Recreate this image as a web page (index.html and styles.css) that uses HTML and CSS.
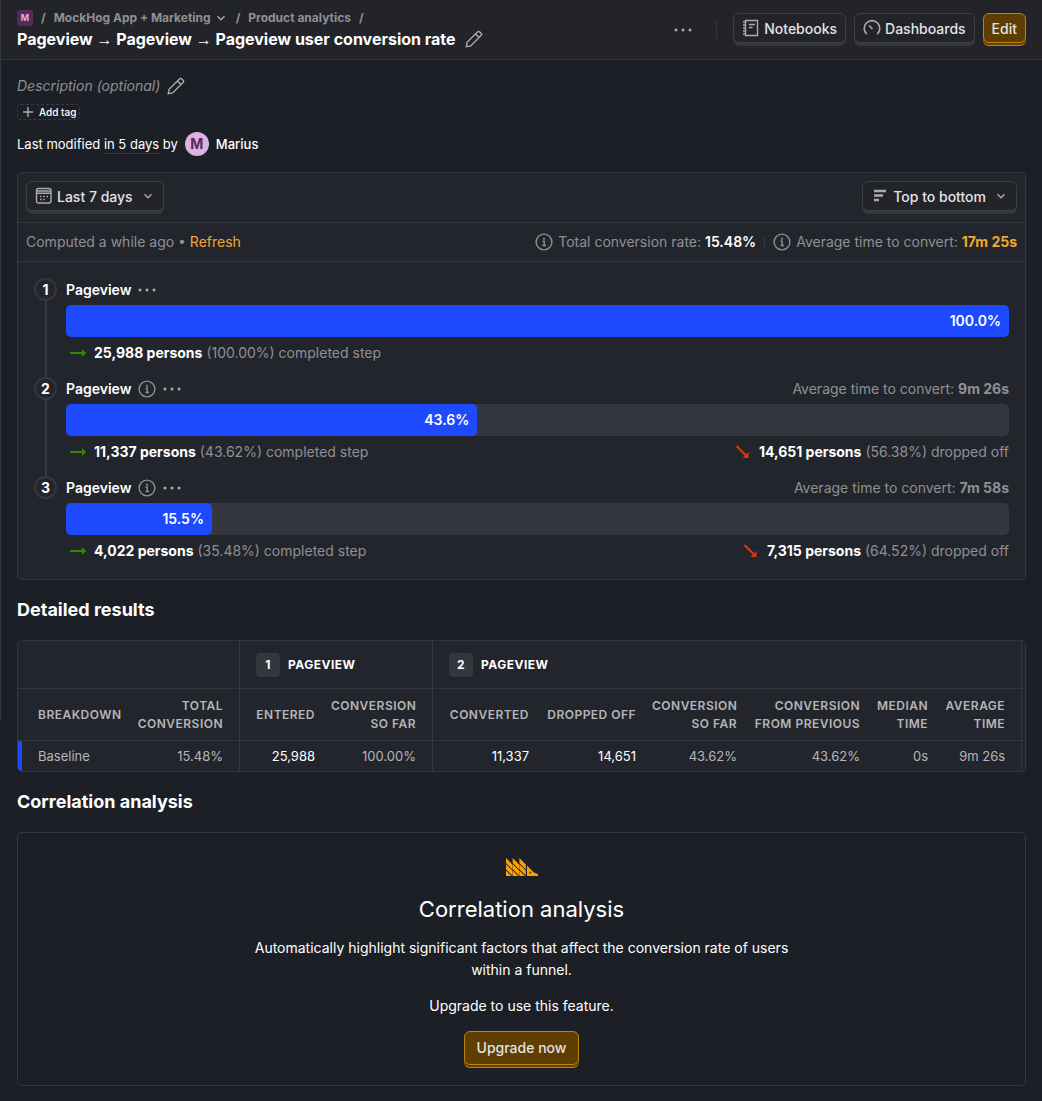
FILE: index.html
```html
<!DOCTYPE html>
<html lang="en">
<head>
<meta charset="utf-8">
<meta name="viewport" content="width=device-width, initial-scale=1">
<title>Pageview → Pageview → Pageview user conversion rate</title>
<link rel="stylesheet" href="styles.css">
</head>
<body>
<svg class="sprite" aria-hidden="true">
  <symbol id="pencil" viewBox="0 0 18 18"><path d="M1.300 16.700l.8-4.400L12.400 2a1.700 1.700 0 0 1 2.400 0l1.200 1.200a1.700 1.700 0 0 1 0 2.400L5.700 15.900zM10.600 4l3.400 3.400"/></symbol>
  <symbol id="dots" viewBox="0 0 18 18"><g fill="currentColor" stroke="none"><circle cx="2" cy="9" r="1.500"/><circle cx="9" cy="9" r="1.500"/><circle cx="16" cy="9" r="1.500"/></g></symbol>
  <symbol id="chevron" viewBox="0 0 14 14"><path d="M3.500 5.200L7 8.700l3.500-3.500"/></symbol>
  <symbol id="info" viewBox="0 0 18 18"><circle cx="9" cy="9" r="7.900"/><path d="M7.600 8.200H9.200v4.300M7.500 12.500h3.500"/><circle cx="9" cy="5.800" r=".4"/></symbol>
  <symbol id="arrow-right" viewBox="0 0 18 18"><path stroke-width="2" d="M1 9h13"/><path fill="currentColor" stroke="none" d="M13 5L17 9l-4 4z"/></symbol>
  <symbol id="arrow-down" viewBox="0 0 18 18"><path stroke-width="2" d="M2.500 3l9.500 9.500"/><path fill="currentColor" stroke="none" d="M14.500 9v6h-6z"/></symbol>
</svg>
<div class="rail"></div>
<div class="page">
  <header class="topbar">
    <div class="topbar-text">
      <nav class="crumbs" aria-label="Breadcrumb">
        <span class="org">M</span><span>/</span>
        <a href="#">MockHog App + Marketing<svg class="icon-sm"><use href="#chevron"/></svg></a><span>/</span>
        <a href="#">Product analytics</a><span>/</span>
      </nav>
      <div class="title"><h1>Pageview <span class="arrow">→</span> Pageview <span class="arrow">→</span> Pageview user conversion rate</h1><button class="plain" aria-label="Edit name"><svg class="icon"><use href="#pencil"/></svg></button></div>
    </div>
    <div class="actions">
      <button class="plain" aria-label="More"><svg class="icon"><use href="#dots"/></svg></button>
      <span class="divider"></span>
      <button class="btn"><svg class="icon" viewBox="0 0 18 18"><path d="M3.500 1.500h12v15h-12zM1 3h2.500M1 6h2.500M1 9h2.500M1 12h2.500M1 15h2.500M7 5.500h6M7 8.500h3.500"/></svg>Notebooks</button>
      <button class="btn"><svg class="icon" viewBox="0 0 18 18"><path stroke-width="1.700" d="M3.800 15.200a7.800 7.800 0 1 1 10.400 0M6 6.500l3.500 3.500"/></svg>Dashboards</button>
      <button class="btn btn-primary">Edit</button>
    </div>
  </header>

  <main class="content">
    <div class="description"><em>Description (optional)</em><button class="plain" aria-label="Edit description"><svg class="icon"><use href="#pencil"/></svg></button></div>
    <button class="add-tag"><svg class="icon-sm" viewBox="0 0 14 14"><path d="M7 2v10M2 7h10"/></svg>Add tag</button>
    <div class="modified"><span>Last modified <span class="dotted">in 5 days</span> by</span><span class="avatar">M</span><span class="who">Marius</span></div>

    <section class="card" aria-label="Funnel">
      <div class="controls">
        <button class="btn"><svg class="icon" viewBox="0 0 18 18"><rect x="1.500" y="1.500" width="14.500" height="14.500" rx="2"/><path d="M1.500 4h14.500M1.500 6.200h14.500"/><path stroke-dasharray="1.500 1.800" d="M5 9.500h8M5 12.500h5.500"/></svg>Last 7 days<svg class="icon-sm"><use href="#chevron"/></svg></button>
        <button class="btn"><svg class="icon" viewBox="0 0 18 18"><path stroke-width="2.400" d="M3 4h12M3 8.500h9M3 13h5"/></svg>Top to bottom<svg class="icon-sm"><use href="#chevron"/></svg></button>
      </div>
      <div class="summary">
        <div>Computed a while ago • <a href="#">Refresh</a></div>
        <div class="summary-stats">
          <svg class="icon"><use href="#info"/></svg><span>Total conversion rate: <b class="strong">15.48%</b></span>
          <span class="divider short"></span>
          <svg class="icon"><use href="#info"/></svg><span>Average time to convert: <b class="accent">17m 25s</b></span>
        </div>
      </div>
      <ol class="steps">
        <li class="step">
          <span class="num">1</span>
          <div class="step-head"><b>Pageview</b><button class="plain" aria-label="Step options"><svg class="icon"><use href="#dots"/></svg></button></div>
          <div class="bar"><div class="fill" style="width:100%">100.0%</div></div>
          <div class="step-foot"><span><svg class="icon good"><use href="#arrow-right"/></svg><b>25,988 persons</b> (100.00%) completed step</span></div>
        </li>
        <li class="step">
          <span class="num">2</span>
          <div class="step-head"><b>Pageview</b><svg class="icon"><use href="#info"/></svg><button class="plain" aria-label="Step options"><svg class="icon"><use href="#dots"/></svg></button><span class="avg">Average time to convert: <strong>9m 26s</strong></span></div>
          <div class="bar"><div class="fill" style="width:43.62%">43.6%</div></div>
          <div class="step-foot"><span><svg class="icon good"><use href="#arrow-right"/></svg><b>11,337 persons</b> (43.62%) completed step</span><span><svg class="icon bad"><use href="#arrow-down"/></svg><b>14,651 persons</b> (56.38%) dropped off</span></div>
        </li>
        <li class="step">
          <span class="num">3</span>
          <div class="step-head"><b>Pageview</b><svg class="icon"><use href="#info"/></svg><button class="plain" aria-label="Step options"><svg class="icon"><use href="#dots"/></svg></button><span class="avg">Average time to convert: <strong>7m 58s</strong></span></div>
          <div class="bar"><div class="fill" style="width:15.48%">15.5%</div></div>
          <div class="step-foot"><span><svg class="icon good"><use href="#arrow-right"/></svg><b>4,022 persons</b> (35.48%) completed step</span><span><svg class="icon bad"><use href="#arrow-down"/></svg><b>7,315 persons</b> (64.52%) dropped off</span></div>
        </li>
      </ol>
    </section>

    <h2>Detailed results</h2>
    <div class="card table-card">
      <table>
        <colgroup><col class="c-breakdown"><col class="c-total"><col class="c-entered"><col class="c-sofar"><col class="c-converted"><col class="c-dropped"><col class="c-sofar-2"><col class="c-previous"><col class="c-median"><col class="c-average"><col></colgroup>
        <thead>
          <tr class="groups"><th colspan="2"></th><th colspan="2" class="edge"><div><span class="badge">1</span>Pageview</div></th><th colspan="6" class="edge"><div><span class="badge">2</span>Pageview</div></th><th class="edge"></th></tr>
          <tr class="heads"><th class="first">Breakdown</th><th class="last">Total conversion</th><th class="edge">Entered</th><th class="last">Conversion<br>so far</th><th class="edge">Converted</th><th>Dropped off</th><th>Conversion<br>so far</th><th>Conversion<br>from previous</th><th>Median time</th><th class="last">Average time</th><th class="edge"></th></tr>
        </thead>
        <tbody>
          <tr><td class="first">Baseline</td><td class="last">15.48%</td><td class="edge count">25,988</td><td class="last">100.00%</td><td class="edge count">11,337</td><td class="count">14,651</td><td>43.62%</td><td>43.62%</td><td>0s</td><td class="last">9m 26s</td><td class="edge"></td></tr>
        </tbody>
      </table>
    </div>

    <h2>Correlation analysis</h2>
    <section class="paywall">
      <svg class="logo" viewBox="0 0 32 18" aria-hidden="true">
        <path d="M0 0l6.400 6.400v5L0 5zM0 6.200l6.400 6.400v5L0 11.200zM0 12.400L5.600 18H0zM6.700 0l6.400 6.400v5L6.700 5zM6.700 6.200l6.400 6.400v5l-6.400-6.400zM6.700 12.400l5.600 5.600H6.700zM13.400 0l6.400 6.400v5L13.400 5zM13.400 6.200l6.400 6.400v5l-6.400-6.400zM13.400 12.400l5.600 5.600h-5.600z"/>
        <path fill-rule="evenodd" d="M21 7.500l6.500 6.700 4.500 2V18H21zM23.500 13.800v1.600h1.600v-1.600z"/>
      </svg>
      <h3>Correlation analysis</h3>
      <p>Automatically highlight significant factors that affect the conversion rate of users within a funnel.</p>
      <p>Upgrade to use this feature.</p>
      <button class="btn btn-primary btn-wide">Upgrade now</button>
    </section>
  </main>
</div>
</body>
</html>
```
FILE: styles.css
```css
* { box-sizing: border-box; }
body {
  margin: 0;
  background: #1d1f27;
  color: #fff;
  font: 14px/20px Inter, "Noto Sans", sans-serif;
}
h1, h2, h3, p, ol { margin: 0; padding: 0; }
a { color: inherit; text-decoration: none; }
button { font: inherit; color: inherit; margin: 0; cursor: pointer; }

.sprite { position: absolute; width: 0; height: 0; }
.icon, .icon-sm {
  flex: none;
  width: 18px;
  height: 18px;
  fill: none;
  stroke: currentColor;
  stroke-width: 1.4;
  color: #a9aaad;
}
.icon-sm { width: 14px; height: 14px; }
.plain { display: flex; padding: 0; border: 0; background: none; }

.rail { position: absolute; top: 0; left: 0; width: 1px; height: 720px; background: #35373e; }
.page { padding-left: 1px; }

.topbar {
  display: flex;
  justify-content: space-between;
  height: 60px;
  padding: 8px 16px 0;
  background: #232429;
  border-bottom: 1px solid #35373e;
}
.crumbs {
  display: flex;
  align-items: center;
  gap: 8px;
  height: 20px;
  color: #8f9094;
  font-size: 12px;
  font-weight: 700;
}
.crumbs a { display: flex; align-items: center; gap: 3px; }
.org {
  width: 16px;
  border-radius: 3px;
  background: #572a5c;
  color: #dcb1e3;
  font-size: 9px;
  font-weight: 700;
  line-height: 16px;
  text-align: center;
}
.title { display: flex; align-items: center; gap: 9px; height: 22px; }
h1 { font-size: 16px; font-weight: 700; line-height: 22px; }
.arrow { font-family: "Liberation Sans", sans-serif; font-weight: 400; }
.actions { display: flex; gap: 8px; align-items: center; height: 43px; }
.divider { width: 1px; height: 17px; margin: 0 8px 0 16px; background: #35373e; }
.divider.short { height: 14px; margin: 0 3px; }

.btn {
  display: flex;
  align-items: center;
  gap: 4px;
  height: 30px;
  padding: 1px 8px 0;
  margin-bottom: 3px;
  border: 1px solid #3d3f45;
  border-radius: 6px;
  background: #232429;
  box-shadow: 0 3px 0 #35373b;
  color: #e2e3e5;
  font-weight: 500;
}
.btn .icon, .btn .icon-sm { margin-bottom: 2px; }
.btn .icon-sm { margin-left: 4px; }
.btn-primary {
  border-color: #c28305;
  background: #5f3e02;
  box-shadow: 0 2px 0 #5f3e02, 0 3px 0 #c28305;
}
.btn-wide { height: 34px; padding: 0 12px; }

.content { padding: 16px; }
.description { display: flex; align-items: center; gap: 7px; height: 20px; color: #8f9094; }
.add-tag {
  display: flex;
  align-items: center;
  gap: 4px;
  height: 16px;
  margin-top: 8px;
  padding: 0 3px;
  border: 1px dashed #3a3c43;
  border-radius: 4px;
  background: none;
  font-size: 10px;
  font-weight: 500;
}
.modified { display: flex; align-items: center; gap: 7px; height: 24px; margin-top: 12px; font-size: 13px; }
.dotted { padding-bottom: 1px; border-bottom: 1px dotted #4b4d54; }
.avatar {
  width: 24px;
  border-radius: 50%;
  background: #dcb1e3;
  color: #572a5c;
  font-size: 14px;
  font-weight: 700;
  line-height: 24px;
  text-align: center;
}
.who { font-weight: 500; }

.card { border: 1px solid #35373e; border-radius: 5px; background: #23252c; }
section.card { margin-top: 16px; }
.controls { display: flex; justify-content: space-between; padding: 8px; }
.summary {
  display: flex;
  justify-content: space-between;
  align-items: center;
  height: 40px;
  padding: 0 8px;
  border: 1px solid #35373e;
  border-width: 1px 0;
  color: #8f9094;
}
.summary a, .accent { color: #f1a82c; }
.summary-stats { display: flex; align-items: center; gap: 5px; }
.summary-stats .icon, .step-head > .icon { color: #8f9094; }
.strong { color: #fff; font-weight: 600; }

.steps { list-style: none; padding: 16px 16px 18px; }
.step { position: relative; padding: 0 0 14px 32px; }
.step:last-child { padding-bottom: 0; }
.step:not(:last-child)::before {
  content: "";
  position: absolute;
  top: 12px;
  bottom: -2px;
  left: 11px;
  width: 2px;
  background: #35373e;
}
.num {
  position: absolute;
  top: 0;
  left: 0;
  width: 23px;
  border: 2px solid #35373e;
  border-radius: 50%;
  background: #23252c;
  font-weight: 700;
  line-height: 19px;
  text-align: center;
}
.step-head { display: flex; align-items: center; gap: 7px; height: 24px; }
.step-head b { font-weight: 600; }
.step-foot b { color: #fff; font-weight: 700; }
.avg { margin-left: auto; color: #8f9094; }
.bar { height: 32px; margin-top: 3px; border-radius: 5px; background: #35373f; }
.fill {
  height: 32px;
  padding-right: 8px;
  border-radius: 5px;
  background: #1d4aff;
  font-weight: 600;
  line-height: 32px;
  text-align: right;
}
.step-foot { display: flex; justify-content: space-between; margin-top: 6px; color: #8f9094; }
.step-foot span { display: block; }
.step-foot .icon { margin: 0 7px 0 3px; vertical-align: -4px; }
.step-foot .good { color: #388600; }
.step-foot .bad { color: #db3707; }

h2 { margin: 16px 0; font-size: 18px; font-weight: 700; line-height: 28px; }

.table-card { overflow: hidden; }
table { width: 100%; border-collapse: separate; border-spacing: 0; table-layout: fixed; }
.c-breakdown { width: 111px; }
.c-total { width: 110px; }
.c-entered { width: 84px; }
.c-sofar { width: 109px; }
.c-converted { width: 105px; }
.c-dropped { width: 107px; }
.c-sofar-2 { width: 101px; }
.c-previous { width: 123px; }
.c-median { width: 68px; }
.c-average { width: 85px; }
th, td { padding: 0 8px; text-align: right; color: #b5b6b9; }
th {
  border-bottom: 1px solid #35373e;
  font-size: 12px;
  font-weight: 600;
  letter-spacing: 0.04em;
  line-height: 18px;
  text-transform: uppercase;
}
td { height: 30px; font-size: 13px; }
.groups th { height: 48px; padding: 0 16px; color: #fff; font-weight: 700; }
.groups div { display: flex; align-items: center; gap: 8px; }
.heads th { height: 52px; }
.badge { width: 24px; border-radius: 4px; background: #35373f; line-height: 24px; text-align: center; }
.edge { border-left: 1px solid #35373e; }
th.last, td.last { padding-right: 16px; }
th.first, td.first { padding-left: 20px; text-align: left; }
td.first { padding-left: 16px; border-left: 4px solid #1d4aff; }
td.count { color: #fff; }
tr > :last-child.edge { padding: 0; }

.paywall {
  display: flex;
  flex-direction: column;
  align-items: center;
  padding: 25px 16px 17px;
  border: 1px solid #35373e;
  border-radius: 5px;
  text-align: center;
}
.logo { width: 32px; height: 18px; fill: #f9a302; }
h3 { margin-top: 16px; font-size: 22px; font-weight: 400; line-height: 34px; }
.paywall p { max-width: 560px; margin-top: 11px; line-height: 22px; }
.paywall p + p { margin-top: 14px; }
.paywall .btn { margin-top: 14px; }
```
